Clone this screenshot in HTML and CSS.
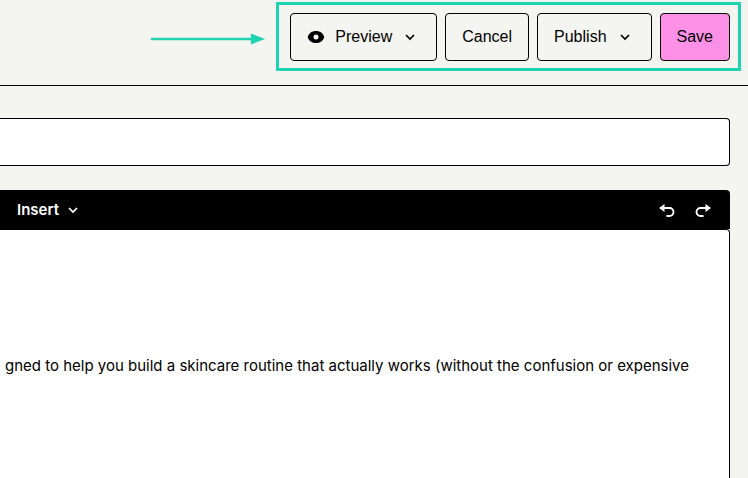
FILE: index.html
```html
<!DOCTYPE html>
<html lang="en">
<head>
    <meta charset="UTF-8">
    <meta name="viewport" content="width=device-width, initial-scale=1.0">
    <title>Edit post</title>
    <link rel="stylesheet" href="styles.css">
</head>
<body>
    <header class="header">
        <svg class="arrow" width="114" height="12" viewBox="0 0 114 12" aria-hidden="true">
            <path d="M1 6H100" stroke="#1dd3b0" stroke-width="2.5" stroke-linecap="round"/>
            <path d="M100 .5L114 6L100 11.5Z" fill="#1dd3b0"/>
        </svg>
        <div class="actions">
            <button type="button" class="btn">
                <svg class="eye" width="18" height="14" viewBox="0 0 18 14" aria-hidden="true">
                    <path fill="currentColor" fill-rule="evenodd" d="M9 1C5 1 2 3 .7 7C2 11 5 13 9 13S16 11 17.300 7C16 3 13 1 9 1ZM9 4.500A2.500 2.500 0 1 1 9 9.500A2.500 2.500 0 1 1 9 4.500Z"/>
                </svg>
                Preview
                <svg class="chevron" width="20" height="12" viewBox="0 0 20 12" aria-hidden="true">
                    <path d="M6 4L10 8L14 4"/>
                </svg>
            </button>
            <button type="button" class="btn">Cancel</button>
            <button type="button" class="btn">
                Publish
                <svg class="chevron" width="20" height="12" viewBox="0 0 20 12" aria-hidden="true">
                    <path d="M6 4L10 8L14 4"/>
                </svg>
            </button>
            <button type="button" class="btn btn-save">Save</button>
        </div>
    </header>

    <main class="content">
        <input type="text" class="title-input" aria-label="Title">

        <div class="toolbar">
            <button type="button" class="tool">
                Insert
                <svg class="chevron" width="12" height="12" viewBox="4 0 12 12" aria-hidden="true">
                    <path d="M6 4L10 8L14 4"/>
                </svg>
            </button>
            <div class="history">
                <button type="button" class="tool" aria-label="Undo">
                    <svg width="16" height="16" viewBox="0 0 16 16" aria-hidden="true">
                        <path d="M4 6H10.500A3.900 3.900 0 0 1 10.500 14H7.500" fill="none" stroke="currentColor" stroke-width="1.800"/>
                        <path d="M0 6L5.500 2V10Z" fill="currentColor"/>
                    </svg>
                </button>
                <button type="button" class="tool" aria-label="Redo">
                    <svg width="16" height="16" viewBox="0 0 16 16" aria-hidden="true">
                        <path d="M12 6H5.500A3.900 3.900 0 0 0 5.500 14H8.500" fill="none" stroke="currentColor" stroke-width="1.800"/>
                        <path d="M16 6L10.500 2V10Z" fill="currentColor"/>
                    </svg>
                </button>
            </div>
        </div>

        <div class="editor">
            <p>gned to help you build a skincare routine that actually works (without the confusion or expensive</p>
        </div>
    </main>
</body>
</html>
```

FILE: styles.css
```css
* {
    box-sizing: border-box;
}

body {
    margin: 0;
    min-height: 100vh;
    display: flex;
    flex-direction: column;
    background-color: #f4f4f0;
    color: #000;
    font-family: "Liberation Sans", Arial, sans-serif;
    font-size: 16px;
    line-height: 24px;
    overflow-x: hidden;
}

button {
    color: inherit;
    font: inherit;
    cursor: pointer;
}

.header {
    display: flex;
    align-items: center;
    justify-content: flex-end;
    gap: 11px;
    padding: 2px 7px 14px 0;
    border-bottom: 1px solid #000;
}

.arrow {
    flex: none;
    margin-top: 4px;
}

.actions {
    display: flex;
    gap: 8px;
    padding: 8px 8px 7px 11px;
    border: 3px solid #1dd3b0;
}

.btn {
    display: flex;
    align-items: center;
    height: 48px;
    padding: 0 16px;
    background-color: transparent;
    border: 1px solid #000;
    border-radius: 4px;
}

.btn-save {
    background-color: #ff90e8;
}

.eye {
    margin-right: 10px;
}

.chevron {
    margin-left: 8px;
    fill: none;
    stroke: currentColor;
    stroke-width: 1.75;
}

.content {
    flex: 1;
    display: flex;
    flex-direction: column;
    padding: 32px 18px 0 0;
}

.title-input {
    width: 100%;
    height: 48px;
    padding: 0 16px;
    font: inherit;
    background-color: #fff;
    border: 1px solid #000;
    border-left: none;
    border-radius: 0 4px 4px 0;
}

.toolbar {
    display: flex;
    align-items: center;
    justify-content: space-between;
    height: 39px;
    margin-top: 24px;
    padding: 0 19px 0 17px;
    background-color: #000;
    color: #fff;
    border-radius: 0 4px 0 0;
}

.tool {
    display: flex;
    align-items: center;
    padding: 0;
    background: none;
    border: none;
    font-family: Inter, sans-serif;
    font-size: 15px;
    font-weight: 600;
}

.history {
    display: flex;
    gap: 20px;
}

.editor {
    flex: 1;
    padding: 124px 40px 0 0;
    background-color: #fff;
    border: solid #000;
    border-width: 1px 1px 0 0;
    border-radius: 0 4px 0 0;
}

.editor p {
    display: flex;
    justify-content: flex-end;
    margin: 0;
    font-family: Inter, sans-serif;
    font-size: 15px;
    white-space: nowrap;
}
```
